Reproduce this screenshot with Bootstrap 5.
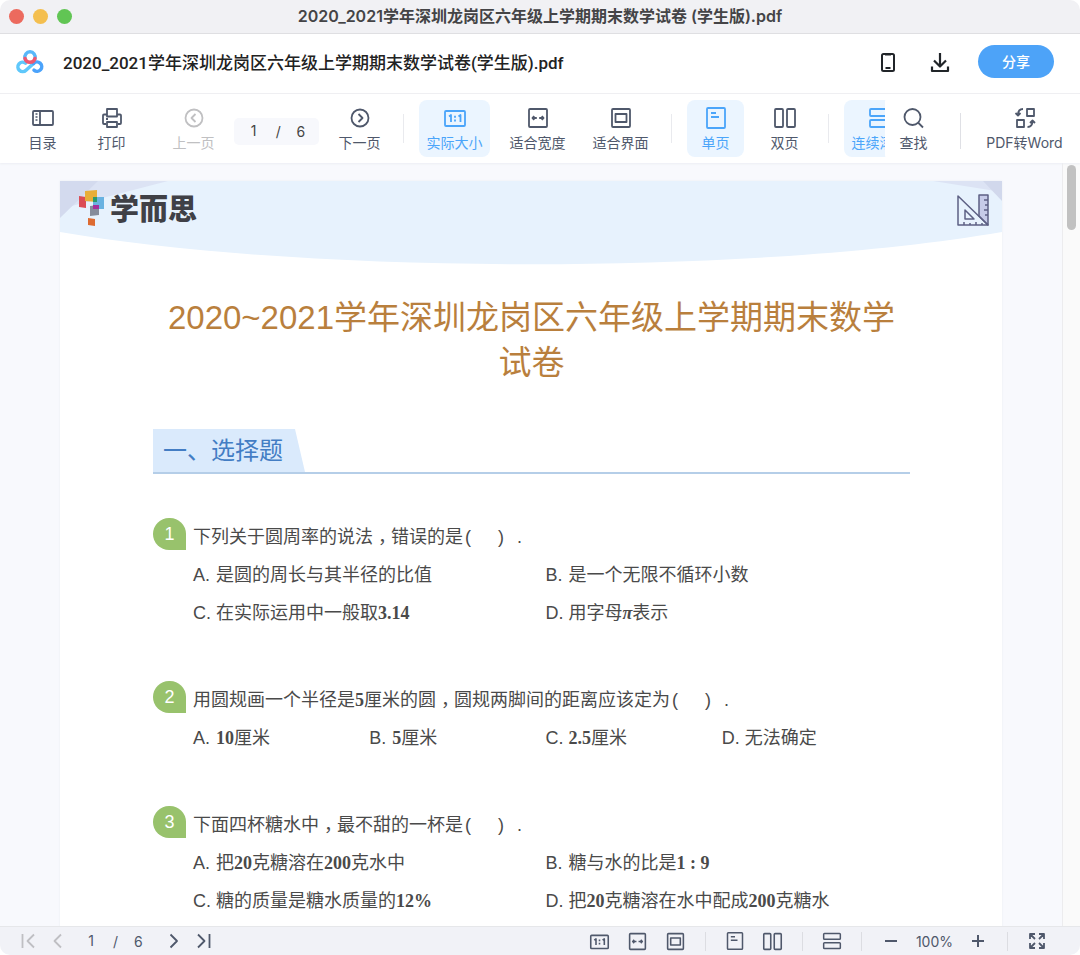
<!DOCTYPE html>
<html lang="zh-CN">
<head>
<meta charset="utf-8">
<meta name="viewport" content="width=device-width, initial-scale=1">
<title>2020_2021学年深圳龙岗区六年级上学期期末数学试卷(学生版).pdf</title>
<link rel="stylesheet" href="https://cdn.jsdelivr.net/npm/bootstrap@5.3.0/dist/css/bootstrap.min.css">
<style>
  body { font-family: Inter, "Noto Sans CJK SC", sans-serif; color: #4f586b; background: #fff; font-size: 14px; }
  svg { display: block; fill: none; stroke-linejoin: round; }
  svg:not([stroke]) { stroke: currentColor; }
  svg:not([stroke-width]) { stroke-width: 1.8; }
  button { color: inherit; }
  .pdf-window { border-radius: 10px; }
  .title-bar { height: 34px; padding-bottom: 2px; background: #f1f1f4; border-bottom: 1px solid #dfdfe2; }
  .title-bar h1 { font-size: 16px; line-height: 20px; font-weight: 600; color: #444446; }
  .lights { left: 9px; top: 9px; gap: 9px; }
  .lights button { width: 15px; height: 15px; border-radius: 50%; border: 0; padding: 0; }
  .file-bar { height: 60px; padding: 0 26px 4px 16px; border-bottom: 1px solid #efeff2; color: #111; }
  .file-name { font-family: Roboto, "Noto Sans CJK SC", sans-serif; font-size: 17px; font-weight: 500; color: #222; margin-left: 19px; padding-top: 4px; }
  .share-btn { width: 76px; height: 33px; background: #4da3f8; color: #fff; font-size: 14px; font-weight: 500; padding: 0; border: 0; }
  .tool-bar { height: 69px; box-shadow: 0 1px 2px #eceef3; z-index: 1; }
  .tools-left { min-width: 0; padding-left: 14px; }
  .tools-left .tool + .tool { margin-left: 12px; }
  .tools-left .tool.tool-prev { margin-left: 25px; }
  .tool { width: 57px; height: 57px; flex: none; border: 0; background: none; border-radius: 8px; padding: 6px 0 0; display: flex; flex-direction: column; align-items: center; gap: 2px; line-height: 22px; white-space: nowrap; }
  .tool-wide { width: 71px; }
  .tool-word { width: 91px; }
  .tool.on { background: #ebf5ff; color: #4ba5fa; }
  .tool:disabled { color: #c0c0c2; }
  .tool-sep { width: 1px; height: 29px; background: #e9eaee; flex: none; margin: 0 15px; }
  .tools-right .tool-sep { height: 36px; margin: 4px 18px 0; background: #dfe0e5; }
  .page-box { width: 85px; height: 27px; flex: none; background: #f7f8fc; border-radius: 5px; color: #444; margin: 5px 12px 0; }
  .page-input { width: 20px; border: 0; background: none; padding: 0; text-align: center; color: inherit; font-size: 14px; line-height: 20px; }
  .tools-right { border-radius: 8px 0 0 8px; padding-right: 10px; margin-left: -8px; }
  .viewer { background: #f8f9fd; min-height: 0; }
  .sheet-wrap { padding: 18px 60px 0; min-width: 0; }
  .sheet { min-height: 100vh; background: #fff; box-shadow: 0 0 2px #e9ebf3; font-family: "Liberation Sans", "Noto Sans CJK SC", sans-serif; color: #4a4a4a; font-size: 18px; }
  .banner { height: 84px; }
  .banner-logo { left: 18px; top: 8px; gap: 3px; font: 900 29px/36px "Noto Sans CJK SC", sans-serif; color: #3f4046; }
  .banner-tool { right: 12px; top: 12px; }
  .sheet-body { padding: 0 92px 0 93px; }
  .paper-title { color: #b97f3d; font-size: 33px; line-height: 45px; font-weight: 400; margin: 30px 0 44px; text-align: center; }
  .section-line { border-bottom: 2px solid #b5cee8; margin-bottom: 44px; }
  .section-line h3 { width: 152px; height: 43px; padding-left: 10px; background: #daeafc; clip-path: polygon(0 0, 142px 0, 100% 100%, 0 100%); color: #437dc4; font-size: 24px; line-height: 43px; font-weight: 400; margin: 0; }
  .question { line-height: 38px; margin-bottom: 49px; }
  .num { width: 33px; height: 32px; background: #98c26c; border-radius: 16px 16px 0 16px; color: #fff; line-height: 32px; text-align: center; flex: none; margin-right: 7px; }
  .q-text { white-space: nowrap; height: 38px; }
  .q-list { padding: 0 12px 0 40px; margin: 0; list-style: none; }
  .q-list li { white-space: nowrap; height: 38px; }
  .question b { font-family: "Liberation Serif", serif; line-height: 1; }
  .letter { display: inline-block; width: 23px; line-height: 20px; }
  .pause { font-feature-settings: "halt"; padding: 0 4px 0 5px; }
  .blank { display: inline-block; width: 39px; line-height: 20px; margin: 0 13px 0 2px; text-align: justify; text-align-last: justify; }
  .scroll-track { width: 18px; background: #fafafa; border-left: 1px solid #ececee; padding: 2px 4px; }
  .scroll-thumb { width: 9px; height: 65px; border-radius: 5px; background: #c1c1c1; }
  .status-bar { height: 29px; background: #f1f2f7; border-top: 1px solid #e6e7ea; padding: 0 32px 0 17px; }
  .status-bar button { border: 0; background: none; padding: 0; width: 22px; }
  .status-bar button svg { margin: 0 auto; }
  .status-bar button:disabled { color: #bfbfc3; }
  .status-view button + button { margin-left: 16px; }
  .status-pages { margin: 0 12px; }
  .status-sep { width: 1px; height: 19px; background: #dcdde2; margin: 0 18px; }
  .zoom-level { margin: 0 14px; }
</style>
</head>
<body>
<svg width="0" height="0" class="position-absolute" aria-hidden="true">
  <symbol id="i-ratio" viewBox="0 0 24 24"><rect x="2" y="5" width="20" height="15" rx="1"/><path d="M6 10.500l2-1.500v7M15.500 10.500l2-1.500v7"/><path d="M12 9.800v2M12 13.500v2"/></symbol>
  <symbol id="i-width" viewBox="0 0 24 24"><rect x="3" y="3" width="18" height="18" rx="1"/><path d="M10.800 12H6.500m1.800-1.800L6.500 12l1.800 1.800M13.200 12H17.500m-1.800-1.800L17.500 12l-1.800 1.800"/></symbol>
  <symbol id="i-fit" viewBox="0 0 24 24"><rect x="3" y="3" width="18" height="18" rx="1"/><rect x="6.500" y="8" width="11" height="8"/></symbol>
  <symbol id="i-single" viewBox="0 0 24 24"><rect x="3" y="2" width="18" height="20" rx="1"/><path d="M7 7h5M7 11h8"/></symbol>
  <symbol id="i-double" viewBox="0 0 24 24"><rect x="2" y="3" width="8" height="18" rx="1"/><rect x="14" y="3" width="8" height="18" rx="1"/></symbol>
  <symbol id="i-rows" viewBox="0 0 24 24"><rect x="2" y="3" width="20" height="7" rx="1"/><rect x="2" y="14" width="20" height="7" rx="1"/></symbol>
</svg>

<div class="pdf-window d-flex flex-column vh-100 overflow-hidden">
  <header class="title-bar position-relative d-flex align-items-center justify-content-center flex-shrink-0">
    <div class="lights position-absolute d-flex">
      <button style="background:#ec6a5e" aria-label="关闭"></button>
      <button style="background:#f4bf4f" aria-label="最小化"></button>
      <button style="background:#61c554" aria-label="全屏"></button>
    </div>
    <h1 class="m-0 text-nowrap">2020_2021学年深圳龙岗区六年级上学期期末数学试卷 (学生版).pdf</h1>
  </header>

  <div class="file-bar d-flex align-items-center flex-shrink-0">
    <svg width="28" height="24" viewBox="0 0 28 24" stroke-linecap="round" stroke-width="3.500" aria-hidden="true">
      <path d="M9.500 13.200A4.700 4.700 0 1 0 10 20.200L17.500 13.500" stroke="#5fc8fb"/>
      <path d="M17.500 13.500A4.700 4.700 0 1 1 18 20.200" stroke="#4ba3fb"/>
      <path d="M9 8.500A5.200 5.200 0 1 1 19 8.500" stroke="#58b8fa"/>
      <path d="M9 8.500A5.200 5.200 0 0 0 19 8.500" stroke="#ee5870"/>
    </svg>
    <div class="file-name flex-grow-1 text-nowrap">2020_2021学年深圳龙岗区六年级上学期期末数学试卷(学生版).pdf</div>
    <button class="btn p-0 border-0 me-4" aria-label="手机查看">
      <svg width="28" height="22" viewBox="0 0 28 22" stroke-width="2"><rect x="8" y="3" width="12" height="17" rx="1.500"/><path d="M11 3.500h6M11.500 17h5"/></svg>
    </button>
    <button class="btn p-0 border-0 me-4" aria-label="下载">
      <svg width="28" height="22" viewBox="0 0 28 22" stroke-width="2.200"><path d="M14 2v13M8 9.500l6 6 6-6M6 15.500V20h16v-4.500"/></svg>
    </button>
    <button class="share-btn btn rounded-pill">分享</button>
  </div>

  <nav class="tool-bar d-flex bg-white flex-shrink-0 position-relative" aria-label="工具栏">
    <div class="tools-left d-flex align-items-center overflow-hidden flex-grow-1">
      <button class="tool"><svg width="24" height="24" viewBox="0 0 24 24"><rect x="2" y="5" width="20" height="14" rx="1"/><path d="M9 5v14"/><path d="M4.500 8h2M4.500 11h2M4.500 14h2" stroke-width="1.500"/></svg>目录</button>
      <button class="tool"><svg width="24" height="24" viewBox="0 0 24 24"><path d="M7 9.500V3h10v6.500M6 18H4q-1 0-1-1V9.500q0-1 1-1h3v2h10v-2h3q1 0 1 1V17q0 1-1 1h-2M7 16h10v5H7z"/><path d="M6 13h2"/></svg>打印</button>
      <button class="tool tool-prev" disabled><svg width="24" height="24" viewBox="0 0 24 24"><circle cx="12" cy="12" r="8.500"/><path d="M13.500 8l-4 4 4 4"/></svg>上一页</button>
      <div class="page-box d-flex align-items-center justify-content-center"><input class="page-input" value="1" aria-label="页码"><span class="mx-2">&nbsp;/&nbsp;</span><span class="mx-1">6</span></div>
      <button class="tool"><svg width="24" height="24" viewBox="0 0 24 24"><circle cx="12" cy="12" r="8.500"/><path d="M10.500 8l4 4-4 4"/></svg>下一页</button>
      <span class="tool-sep"></span>
      <button class="tool tool-wide on"><svg width="24" height="24"><use href="#i-ratio"/></svg>实际大小</button>
      <button class="tool tool-wide"><svg width="24" height="24"><use href="#i-width"/></svg>适合宽度</button>
      <button class="tool tool-wide"><svg width="24" height="24"><use href="#i-fit"/></svg>适合界面</button>
      <span class="tool-sep"></span>
      <button class="tool on"><svg width="24" height="24"><use href="#i-single"/></svg>单页</button>
      <button class="tool"><svg width="24" height="24"><use href="#i-double"/></svg>双页</button>
      <span class="tool-sep"></span>
      <button class="tool tool-wide on"><svg width="24" height="24"><use href="#i-rows"/></svg>连续滚动</button>
    </div>
    <div class="tools-right d-flex align-items-center bg-white flex-shrink-0 position-relative">
      <button class="tool"><svg width="24" height="24" viewBox="0 0 24 24"><circle cx="10.500" cy="11" r="8"/><path d="M16 16.500l5 5"/></svg>查找</button>
      <span class="tool-sep"></span>
      <button class="tool tool-word"><svg width="24" height="24" viewBox="0 0 24 24"><rect x="14" y="3" width="7" height="7"/><rect x="4" y="14" width="7" height="7"/><path d="M10 3q-5 0-5 6M2.500 7L5 9.500 7.500 7M14.500 21q5 0 5-6M17 17l2.500-2.500L22 17"/></svg>PDF转Word</button>
    </div>
  </nav>

  <main class="viewer d-flex flex-grow-1 overflow-hidden">
    <div class="sheet-wrap flex-grow-1">
      <article class="sheet">
        <div class="banner position-relative">
          <svg class="w-100 h-100" viewBox="0 0 942 84" preserveAspectRatio="none" stroke="none" aria-hidden="true">
            <path d="M0 0H942V51C692 94 250 94 0 51z" fill="#e7f2fd"/>
            <path d="M0 0H108L0 28z" fill="#dce3f4"/><path d="M0 0H38L0 37z" fill="#d3daee"/>
            <path d="M873 0H942V11z" fill="#dce3f4"/><path d="M923 0H942V20z" fill="#d1d8ec"/>
          </svg>
          <div class="banner-logo position-absolute d-flex align-items-start">
            <svg width="29" height="37" viewBox="0 0 29 37" stroke="none" aria-hidden="true">
              <path d="M1 7l7 1v11l-7-1z" fill="#db4d55"/><path d="M15 8h11v12H15z" fill="#69b2e1"/><path d="M7 2l12-1v12L7 12z" fill="#e8ae39"/><path d="M15 8h4v5h-4z" fill="#2c9a6c"/><path d="M12 17l9-1v10l-9 1z" fill="#858c9b"/><path d="M15 16h6v4h-6z" fill="#a62e9b"/><path d="M10 29l7 1v7l-7-1z" fill="#dd6b31"/>
            </svg>
            <span>学而思</span>
          </div>
          <svg class="banner-tool position-absolute" width="34" height="34" viewBox="0 0 34 34" stroke="#5d6084" stroke-width="1.500" aria-hidden="true">
            <path d="M23 2h9v30L23 23z" fill="#c6cbe8"/><path d="M2 3v29h30zM9 17v9h9z"/><path d="M28 7h4M29 12h3M28 17h4M29 22h3M8 32v-3M14 32v-2M20 32v-3M26 32v-2"/>
          </svg>
        </div>
        <div class="sheet-body">
          <h2 class="paper-title">2020~2021学年深圳龙岗区六年级上学期期末数学试卷</h2>
          <div class="section-line"><h3>一、选择题</h3></div>

          <section class="question">
            <div class="d-flex"><span class="num">1</span><div class="q-text">下列关于圆周率的说法<span class="pause">，</span>错误的是<span class="blank">( )</span>.</div></div>
            <ul class="q-list row g-0">
              <li class="col-6"><span class="letter">A.</span>是圆的周长与其半径的比值</li>
              <li class="col-6"><span class="letter">B.</span>是一个无限不循环小数</li>
              <li class="col-6"><span class="letter">C.</span>在实际运用中一般取<b>3.14</b></li>
              <li class="col-6"><span class="letter">D.</span>用字母<b><i>π</i></b>表示</li>
            </ul>
          </section>

          <section class="question">
            <div class="d-flex"><span class="num">2</span><div class="q-text">用圆规画一个半径是<b>5</b>厘米的圆<span class="pause">，</span>圆规两脚间的距离应该定为<span class="blank">( )</span>.</div></div>
            <ul class="q-list row g-0">
              <li class="col-3"><span class="letter">A.</span><b>10</b>厘米</li>
              <li class="col-3"><span class="letter">B.</span><b>5</b>厘米</li>
              <li class="col-3"><span class="letter">C.</span><b>2.5</b>厘米</li>
              <li class="col-3"><span class="letter">D.</span>无法确定</li>
            </ul>
          </section>

          <section class="question">
            <div class="d-flex"><span class="num">3</span><div class="q-text">下面四杯糖水中<span class="pause">，</span>最不甜的一杯是<span class="blank">( )</span>.</div></div>
            <ul class="q-list row g-0">
              <li class="col-6"><span class="letter">A.</span>把<b>20</b>克糖溶在<b>200</b>克水中</li>
              <li class="col-6"><span class="letter">B.</span>糖与水的比是<b>1 : 9</b></li>
              <li class="col-6"><span class="letter">C.</span>糖的质量是糖水质量的<b>12%</b></li>
              <li class="col-6"><span class="letter">D.</span>把<b>20</b>克糖溶在水中配成<b>200</b>克糖水</li>
            </ul>
          </section>
        </div>
      </article>
    </div>
    <div class="scroll-track flex-shrink-0"><div class="scroll-thumb"></div></div>
  </main>

  <footer class="status-bar d-flex align-items-center justify-content-between flex-shrink-0">
    <div class="d-flex align-items-center">
      <button disabled aria-label="首页"><svg width="16" height="16" viewBox="0 0 16 16"><path d="M2.500 1v14M14 1.500L7.500 8l6.500 6.500"/></svg></button>
      <button class="ms-2" disabled aria-label="上一页"><svg width="16" height="16" viewBox="0 0 16 16"><path d="M11 1.500L4.500 8l6.500 6.500"/></svg></button>
      <div class="status-pages d-flex align-items-center"><input class="page-input" value="1" aria-label="页码"><span class="mx-2">&nbsp;/&nbsp;</span><span class="mx-1">6</span></div>
      <button class="ms-1" aria-label="下一页"><svg width="16" height="16" viewBox="0 0 16 16"><path d="M4.500 1.500L11 8l-6.500 6.500"/></svg></button>
      <button class="ms-2" aria-label="末页"><svg width="16" height="16" viewBox="0 0 16 16"><path d="M13.500 1v14M2 1.500L8.500 8 2 14.500"/></svg></button>
    </div>
    <div class="status-view d-flex align-items-center">
      <button aria-label="实际大小"><svg width="21" height="21"><use href="#i-ratio"/></svg></button>
      <button aria-label="适合宽度"><svg width="21" height="21"><use href="#i-width"/></svg></button>
      <button aria-label="适合界面"><svg width="21" height="21"><use href="#i-fit"/></svg></button>
      <span class="status-sep"></span>
      <button aria-label="单页"><svg width="20" height="20"><use href="#i-single"/></svg></button>
      <button aria-label="双页"><svg width="21" height="21"><use href="#i-double"/></svg></button>
      <span class="status-sep"></span>
      <button aria-label="连续滚动"><svg width="20" height="20"><use href="#i-rows"/></svg></button>
      <span class="status-sep"></span>
      <button aria-label="缩小"><svg width="12" height="12" viewBox="0 0 12 12" stroke-width="2"><path d="M0 6h12"/></svg></button>
      <span class="zoom-level">100%</span>
      <button aria-label="放大"><svg width="12" height="12" viewBox="0 0 12 12" stroke-width="2"><path d="M0 6h12M6 0v12"/></svg></button>
      <span class="status-sep"></span>
      <button aria-label="全屏"><svg width="16" height="16" viewBox="0 0 16 16"><path d="M1 6V1h5M10 1h5v5M15 10v5h-5M6 15H1v-5M1 1l5 5M15 1l-5 5M15 15l-5-5M1 15l5-5"/></svg></button>
    </div>
  </footer>
</div>
<script src="https://cdn.jsdelivr.net/npm/bootstrap@5.3.0/dist/js/bootstrap.bundle.min.js"></script>
</body>
</html>
